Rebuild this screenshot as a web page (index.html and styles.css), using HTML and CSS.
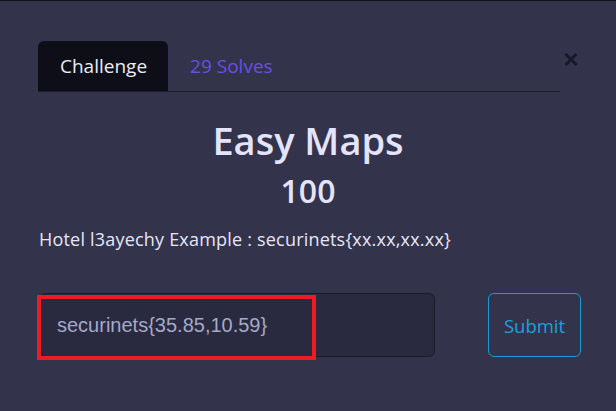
FILE: index.html
```html
<!DOCTYPE html>
<html>
<head>
<meta charset="utf-8">
<link rel="stylesheet" href="styles.css">
</head>
<body>
<div class="modal">
  <div class="top">
    <nav class="tabs">
      <span class="tab active">Challenge</span>
      <span class="tab link">29 Solves</span>
    </nav>
    <span class="close" aria-label="Close">
      <svg width="14" height="13" viewBox="0 0 14 13"><path d="M1.5 1 L12.5 12 M12.5 1 L1.5 12" stroke="#17172a" stroke-width="2.6" fill="none"/></svg>
    </span>
  </div>
  <h2 class="title">Easy Maps</h2>
  <h3 class="points">100</h3>
  <p class="desc">Hotel l3ayechy Example : securinets{xx.xx,xx.xx}</p>
  <div class="form-row">
    <div class="input">securinets{35.85,10.59}</div>
    <button class="submit">Submit</button>
    <div class="mark"></div>
  </div>
</div>
</body>
</html>
```
FILE: styles.css
```css
html, body {
  margin: 0;
  padding: 0;
}
body {
  background: #33334b;
  border-top: 1px solid #111118;
  height: 410px;
  overflow: hidden;
  font-family: "Open Sans", "Noto Sans", sans-serif;
  color: #e6e6fa;
}
.modal {
  padding: 40px 38px 0 38px;
}
.top {
  display: flex;
  align-items: flex-start;
}
.tabs {
  flex: 0 0 522px;
  display: flex;
  border-bottom: 1px solid #1c1c2b;
  height: 50px;
}
.tab {
  display: flex;
  align-items: center;
  padding: 0 21px 0 22px;
  font-size: 19px;
  height: 50px;
  box-sizing: border-box;
}
.tab.active {
  background: #0d0e17;
  color: #ececf8;
  border-radius: 6px 6px 0 0;
}
.tab.link {
  color: #6a4fe2;
}
.close {
  margin-left: auto;
  margin-top: 12px;
  width: 14px;
  height: 13px;
  display: block;
}
.close svg {
  display: block;
}
.title {
  margin: 24px 0 0 0;
  text-align: center;
  font-size: 38px;
  font-weight: 600;
  line-height: 48px;
  color: #e4e4ff;
}
.points {
  margin: 7px 0 0 0;
  text-align: center;
  font-size: 32px;
  font-weight: 600;
  line-height: 40px;
  color: #e4e4ff;
}
.desc {
  margin: 16px 0 0 1px;
  font-size: 18px;
  letter-spacing: 0.2px;
  line-height: 24px;
  color: #e6e6fa;
}
.form-row {
  position: relative;
  display: flex;
  margin: 42px 0 0 2px;
  gap: 53px;
}
.input {
  flex: 0 0 395px;
  height: 64px;
  box-sizing: border-box;
  background: #292a3f;
  border: 1px solid #1a1b29;
  border-radius: 6px;
  padding: 0 0 0 16px;
  display: flex;
  align-items: center;
  font-family: "Liberation Sans", Arial, sans-serif;
  font-size: 20px;
  color: #a4a9ca;
}
.submit {
  flex: 0 0 93px;
  height: 64px;
  background: transparent;
  border: 1px solid #1b9ad6;
  border-radius: 6px;
  color: #1ea0dc;
  font-family: "Open Sans", "Noto Sans", sans-serif;
  font-size: 18.5px;
  padding: 0;
}
.mark {
  position: absolute;
  left: -3px;
  top: 2px;
  width: 279px;
  height: 65px;
  box-sizing: border-box;
  border: 4px solid #ec1c24;
}
```
